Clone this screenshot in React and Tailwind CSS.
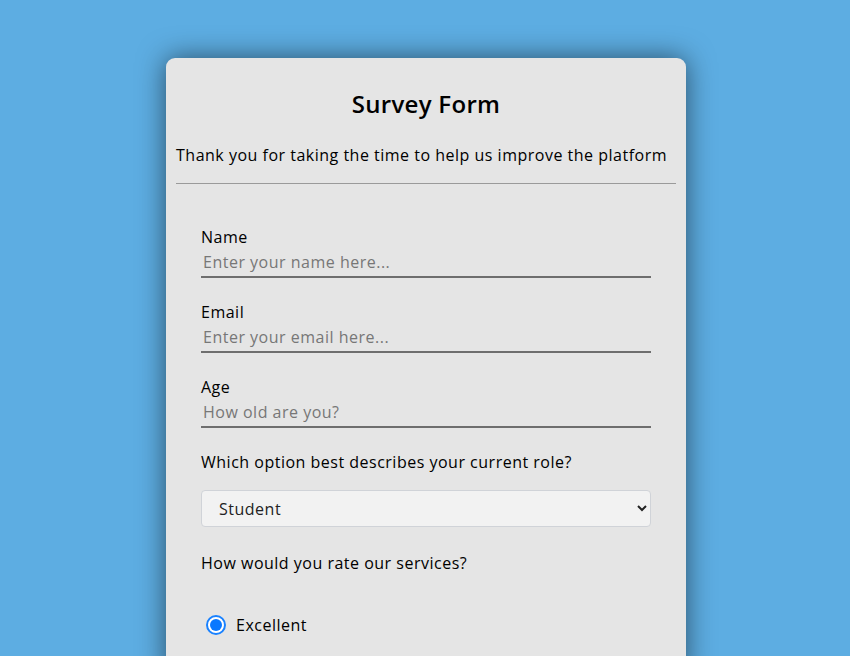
import React from 'react';

export default function App() {
    const fields = [
        { label: "Name", placeholder: "Enter your name here...", type: "text" },
        { label: "Email", placeholder: "Enter your email here...", type: "email" },
        { label: "Age", placeholder: "How old are you?", type: "number" }
    ];

    return (
        <div className="min-h-[656px] bg-[#5dade2] pt-[58px] font-['Open_Sans',sans-serif] tracking-[0.5px] text-black">
            <div className="mx-auto w-[520px] translate-x-[1px] rounded-[9px] bg-[#e5e5e5] px-[10px] pb-10 shadow-[0_0_28px_rgba(0,0,0,0.55)]">
                <h1 className="pt-[28px] text-center text-[24px] font-semibold leading-9 tracking-[0.3px]">Survey Form</h1>
                <p className="mt-[21px] text-[16px] leading-6">Thank you for taking the time to help us improve the platform</p>
                <hr className="mt-[16px] border-t border-[#9a9a9a]" />

                <form className="px-[25px] pt-[41px]">
                    {fields.map((f) => (
                        <div key={f.label} className="mb-[22px]">
                            <label className="block text-[16px] leading-6">{f.label}</label>
                            <input
                                type={f.type}
                                placeholder={f.placeholder}
                                className="mt-[1px] w-full border-b-2 border-[#6e6e6e] bg-transparent px-[2px] pb-[2px] text-[16px] leading-6 outline-none placeholder:text-[#777]"
                            />
                        </div>
                    ))}

                    <label className="block text-[16px] leading-6">Which option best describes your current role?</label>
                    <select className="mt-[16px] h-[37px] w-full rounded-[4px] border border-[#d0d3d8] bg-[#f2f2f2] pl-[13px] pr-2 text-[16px] text-[#222]">
                        <option>Student</option>
                        <option>Full-time job</option>
                        <option>Other</option>
                    </select>

                    <p className="mt-[24px] text-[16px] leading-6">How would you rate our services?</p>

                    <label className="mt-[38px] flex items-center gap-[10px] pl-[5px]">
                        <span className="flex h-[20px] w-[20px] items-center justify-center rounded-full border-2 border-[#1a82ff] bg-white">
                            <span className="h-[12px] w-[12px] rounded-full bg-[#0a78ff]"></span>
                        </span>
                        <span className="text-[16px] leading-6">Excellent</span>
                    </label>
                </form>
            </div>
        </div>
    );
}
